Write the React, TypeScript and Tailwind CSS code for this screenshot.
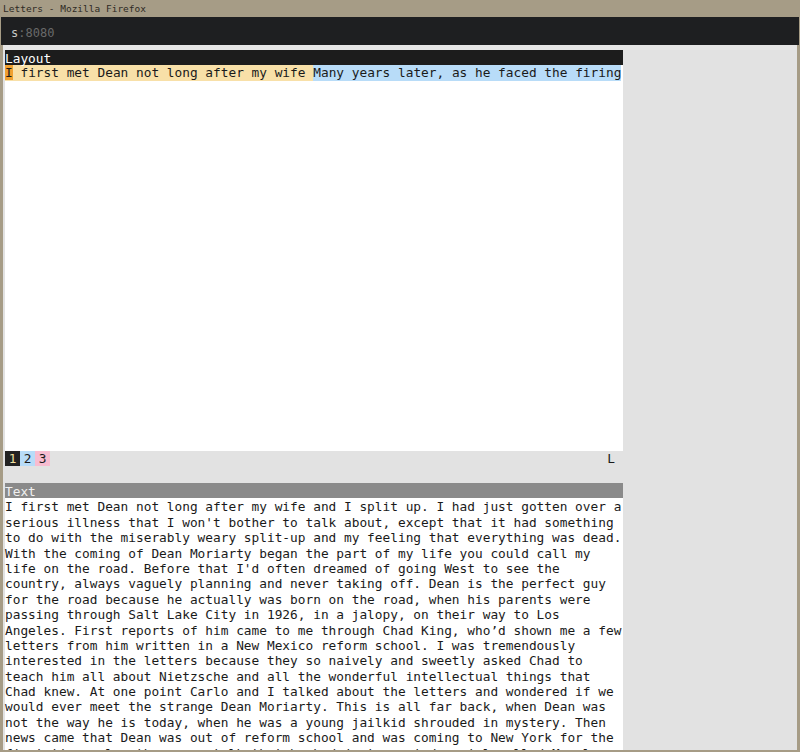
import React from "react";

const mono = { fontFamily: '"DejaVu Sans Mono", "Liberation Mono", monospace' };

const lines = [
  "I first met Dean not long after my wife and I split up. I had just gotten over a",
  "serious illness that I won't bother to talk about, except that it had something",
  "to do with the miserably weary split-up and my feeling that everything was dead.",
  "With the coming of Dean Moriarty began the part of my life you could call my",
  "life on the road. Before that I'd often dreamed of going West to see the",
  "country, always vaguely planning and never taking off. Dean is the perfect guy",
  "for the road because he actually was born on the road, when his parents were",
  "passing through Salt Lake City in 1926, in a jalopy, on their way to Los",
  "Angeles. First reports of him came to me through Chad King, who\u2019d shown me a few",
  "letters from him written in a New Mexico reform school. I was tremendously",
  "interested in the letters because they so naively and sweetly asked Chad to",
  "teach him all about Nietzsche and all the wonderful intellectual things that",
  "Chad knew. At one point Carlo and I talked about the letters and wondered if we",
  "would ever meet the strange Dean Moriarty. This is all far back, when Dean was",
  "not the way he is today, when he was a young jailkid shrouded in mystery. Then",
  "news came that Dean was out of reform school and was coming to New York for the",
  "first time; also there was talk that he had just married a girl called Marylou.",
];

export default function App() {
  return (
    <div className="w-[800px] h-[752px] overflow-hidden bg-[#a69c86] flex flex-col" style={mono}>
      <div className="h-[17px] shrink-0 flex items-center pl-[3px] text-[9.5px] text-[#2e2a24] leading-none">
        Letters - Mozilla Firefox
      </div>
      <div className="h-[28px] shrink-0 mx-[1px] bg-[#1e1f21] flex items-center pl-[10px] pt-[4px] text-[12px] leading-none">
        <span className="text-[#c8c8c8]">s</span>
        <span className="text-[#6a6a6a]">:8080</span>
      </div>
      <div className="flex-1 min-h-0 ml-[3px] mr-[3px] mb-[2px] bg-[#e2e2e2] border-t-[5px] border-[#e6e6e6] pl-[2px] overflow-hidden">
        <div className="w-[618px] text-[12.8px] leading-[15.4px]">
          <div className="h-[401px] bg-white flex flex-col">
            <div className="h-[15.4px] bg-[#1c1c1c] text-white whitespace-pre">
              <span className="relative top-[1px]">Layout</span>
            </div>
            <div className="h-[15.4px] flex whitespace-pre text-[#1a1a1a]">
              <span className="bg-[#f8e0a8]">
                <span className="bg-[#f0a030]">I</span> first met Dean not long after my wife{" "}
              </span>
              <span className="bg-[#b8dcf8]">Many years later, as he faced the firing</span>
            </div>
          </div>
          <div className="h-[15.4px] flex items-stretch whitespace-pre">
            <span className="bg-[#222222] text-[#f0e0a0] w-[15px] text-center">1</span>
            <span className="bg-[#b8dcf8] text-[#1a1a1a] w-[15px] text-center">2</span>
            <span className="bg-[#f8bcd0] text-[#1a1a1a] w-[15px] text-center">3</span>
            <span className="flex-1" />
            <span className="text-[#1a1a1a] pr-[8px]">L</span>
          </div>
          <div className="h-[16.6px]" />
          <div className="h-[15.4px] bg-[#8a8a8a] text-[#f0f0f0] whitespace-pre">
            <span className="relative top-[1px]">Text</span>
          </div>
          <div className="bg-white text-[#1a1a1a]">
            {lines.map((l, i) => (
              <div key={i} className="h-[15.4px] whitespace-pre">
                <span className="relative top-[1px]">{l}</span>
              </div>
            ))}
          </div>
        </div>
      </div>
    </div>
  );
}
